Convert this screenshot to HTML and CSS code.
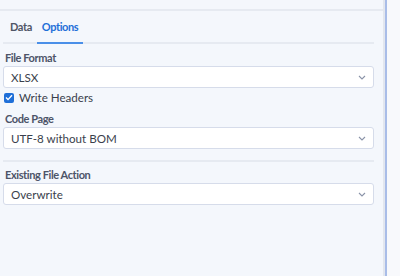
FILE: index.html
```html
<!DOCTYPE html>
<html lang="en">
<head>
	<meta charset="UTF-8">
	<title>Options</title>
	<link rel="stylesheet" href="styles.css">
</head>
<body>
	<div class="shell">
		<div class="panel">
			<div class="topbar"></div>
			<div class="content">
				<nav class="tabs">
					<span class="tab">Data</span>
					<span class="tab active">Options</span>
				</nav>

				<div class="field">
					<label class="label">File Format</label>
					<div class="select">
						<span>XLSX</span>
						<svg class="chevron" width="8" height="5" viewBox="0 0 8 5"><path d="M1 1l3 3 3-3" fill="none" stroke="#8a93a8" stroke-width="1.1"/></svg>
					</div>
				</div>

				<label class="check">
					<span class="box">
						<svg width="8" height="7" viewBox="0 0 8 7"><path d="M1 3.6l2 2 4-4.4" fill="none" stroke="#fff" stroke-width="1.4"/></svg>
					</span>
					Write Headers
				</label>

				<div class="field">
					<label class="label">Code Page</label>
					<div class="select">
						<span>UTF-8 without BOM</span>
						<svg class="chevron" width="8" height="5" viewBox="0 0 8 5"><path d="M1 1l3 3 3-3" fill="none" stroke="#8a93a8" stroke-width="1.1"/></svg>
					</div>
				</div>

				<hr class="divider">

				<div class="field after-divider">
					<label class="label">Existing File Action</label>
					<div class="select">
						<span>Overwrite</span>
						<svg class="chevron" width="8" height="5" viewBox="0 0 8 5"><path d="M1 1l3 3 3-3" fill="none" stroke="#8a93a8" stroke-width="1.1"/></svg>
					</div>
				</div>
			</div>
		</div>
		<div class="edge"></div>
		<div class="outside"></div>
	</div>
</body>
</html>
```

FILE: styles.css
```css
body {
	margin: 0;
	padding: 0;
	font-family: Lato, "Open Sans", Arial, sans-serif;
	font-size: 11.6px;
	color: #333a48;
	background-color: #f4f7fc;
}
.shell {
	display: flex;
	height: 276px;
}
.panel {
	width: 383px;
	background-color: #f4f7fc;
}
.edge {
	width: 2px;
	background-color: #e3e7ef;
	border-right: 2px solid #a9bde8;
}
.outside {
	flex: 1;
	background-color: #f8f9fc;
}
.topbar {
	height: 9px;
	border-bottom: 2px solid #e6eaf1;
}
.content {
	padding: 0 9px 0 3px;
}
.tabs {
	display: flex;
	height: 31px;
	border-bottom: 2px solid #e6eaf1;
	padding-left: 2px;
}
.tab {
	display: flex;
	align-items: center;
	padding: 0 5px;
	font-size: 11px;
	font-weight: 700;
	letter-spacing: -0.4px;
	color: #4f5566;
	margin-bottom: -2px;
	border-bottom: 2px solid transparent;
}
.tab.active {
	color: #1f6fd8;
	border-bottom-color: #4a8fe8;
}
.field {
	display: flex;
	flex-direction: column;
}
.label {
	font-size: 11px;
	font-weight: 700;
	letter-spacing: -0.4px;
	color: #4d5468;
	padding: 5px 0 0 2px;
	height: 17px;
	line-height: 17px;
}
.select {
	display: flex;
	align-items: center;
	justify-content: space-between;
	height: 20px;
	padding: 0 7px;
	background-color: #fff;
	border: 1px solid #d6dcea;
	border-radius: 3px;
	color: #3a3f4c;
}
.chevron {
	margin-top: 1px;
}
.check {
	display: flex;
	align-items: center;
	gap: 5px;
	height: 15px;
	margin-top: 2px;
	padding-left: 1px;
	color: #3a3f4c;
}
.box {
	display: flex;
	align-items: center;
	justify-content: center;
	width: 10px;
	height: 10px;
	border-radius: 2px;
	background-color: #1f6fd8;
}
.divider {
	border: 0;
	border-top: 2px solid #e6eaf1;
	margin: 11px 0 0;
}
.after-divider .label {
	padding-top: 4px;
}
```
